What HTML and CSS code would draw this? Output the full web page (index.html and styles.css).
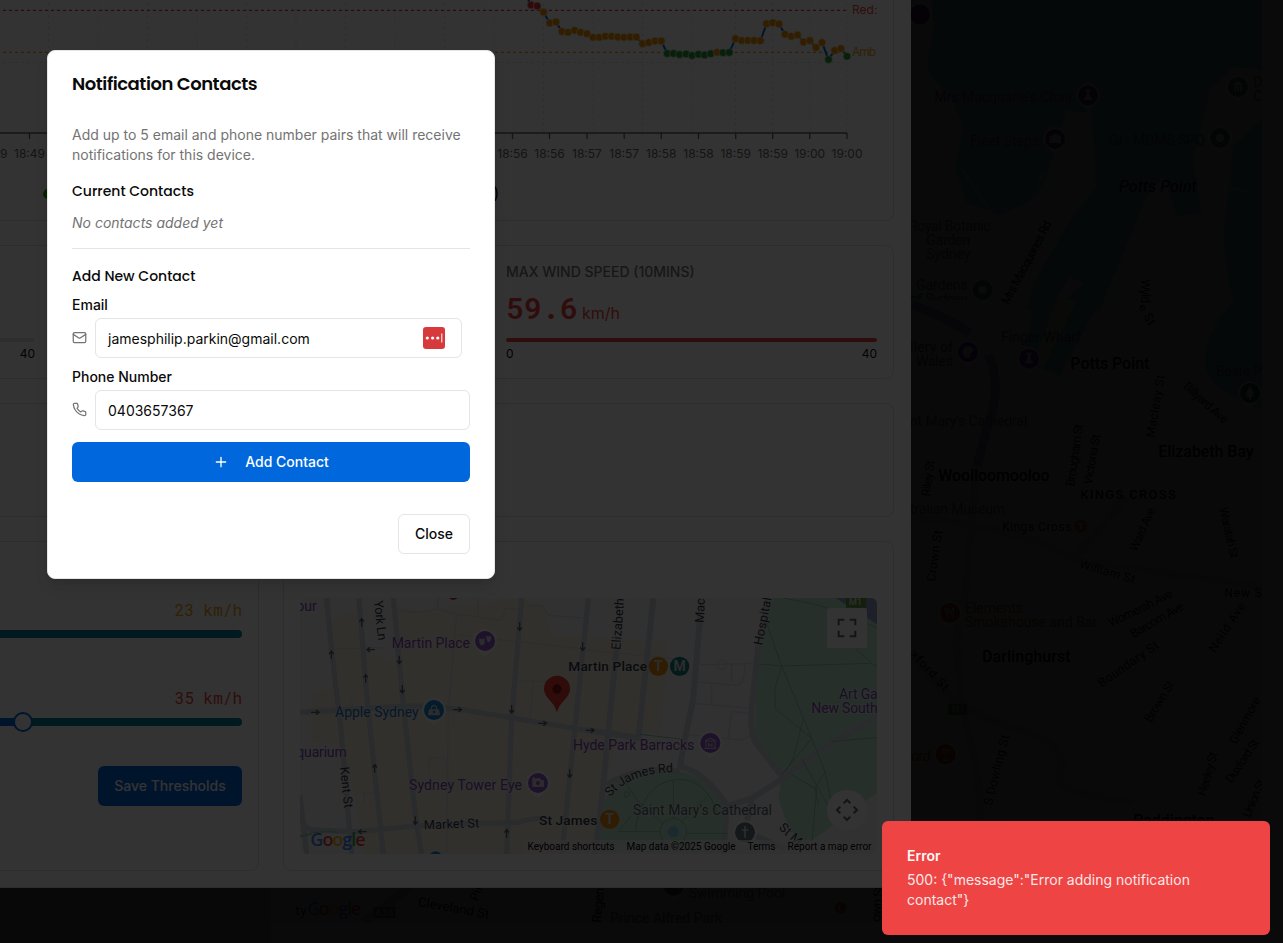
FILE: index.html
```html
<!DOCTYPE html>
<html lang="en">
<head>
<meta charset="utf-8">
<title>Notification Contacts</title>
<link rel="stylesheet" href="styles.css">
</head>
<body>
<svg class="world" viewBox="0 0 1283 943" aria-hidden="true">
  <defs>
    <g id="pin"><path d="M-36 0a36 36 0 1 1 72 0c0 17-13 27-36 45C-23 27-36 17-36 0z" fill="#fff"/><circle r="30"/></g>
    <clipPath id="worldClip"><path d="M271 0H1262V923H271z"/></clipPath>
  </defs>
  <rect width="271" height="943" fill="#d0d0d0"/>
  <rect x="271" width="1012" height="943" fill="#f8f8f8"/>
  <g clip-path="url(#worldClip)">
    <rect x="271" width="991" height="923" fill="#f5f5f5"/>
    <g transform="translate(900 0) scale(.33333)">
      <path d="M30 0H1090V1000H30z" fill="#d5eadc"/>
      <path d="M95 0H1090V210L1000 200 930 270 880 480 905 640 830 650 790 530 740 590 600 930H470L550 850 510 830 450 930H380L400 850 500 680 585 560 570 340 500 330 440 530 400 600 300 645 200 610 165 500 190 380 150 290 80 210 100 90z" fill="#80d0e4"/>
      <path d="M1090 340L1000 440 970 700 985 850 1010 930H1090zM600 930L740 590 790 530 830 650 970 630 990 930z" fill="#f5f5f5"/>
      <path d="M1090 350L1000 440 970 700 985 850 1010 930H1090z" fill="#80d0e4"/>
      <g class="street"><path d="M75 180Q120 350 90 500L70 930M180 500L320 700 200 820M430 520L380 640 250 800M800 650L860 930M900 680L970 930M740 650Q800 680 900 660M640 930L760 640M1050 580L920 540M570 330L585 560M500 360L450 560"/></g>
      <g class="poi purple"><text x="103" y="306" textLength="416">Mrs Macquarie's Chair</text><text x="210" y="438" textLength="207">Fleet Steps</text></g>
      <g fill="#8a42b5"><use href="#pin" x="60" y="43"/><use href="#pin" x="564" y="286"/><use href="#pin" x="465" y="417"/></g>
      <g fill="#557a70"><use href="#pin" x="1014" y="261"/><use href="#pin" x="960" y="414"/><use href="#pin" x="248" y="870"/></g>
      <g fill="#fff"><circle cx="960" cy="414" r="12"/><circle cx="248" cy="870" r="12"/><path d="M552 300h24v-6l-5-2-4-14 6-10h-18l6 10-4 14-5 2zM448 407h8l4-5h10l4 5h9v22h-35zM1000 252l14-8 14 8v4h-28zm3 6h5v16h-5zm9 0h5v16h-5zm9 0h5v16h-5z"/></g>
      <g class="poi grey"><text x="1060" y="261">D</text><text x="1060" y="303">C</text><text x="627" y="435" textLength="288">GI - MDMS SPO</text><text x="26" y="693" textLength="246">Royal Botanic</text><text x="79" y="735" textLength="132">Garden</text><text x="79" y="777" textLength="132">Sydney</text><text x="48" y="870" textLength="155">Gardens</text><text x="30" y="912" textLength="173">of Sydney</text></g>
      <text class="area italic" x="657" y="575" textLength="233">Potts Point</text>
      <g class="road"><text transform="translate(325 916) rotate(-62)" textLength="278">Mrs Macquaries Rd</text><text transform="translate(722 838) rotate(90)" textLength="72">Wyld</text></g>
    </g>
    <g transform="translate(900 300) scale(.33333)">
      <path d="M400 0L370 180 480 230 600 0z" fill="#80d0e4"/><path d="M470 0L400 190 430 200 530 0z" fill="#f0ead8"/>
      <path d="M1000 0Q890 130 920 220Q970 290 1090 330V0z" fill="#80d0e4"/>
      <path d="M30 0H250L260 300 120 420 30 490zM980 560L1090 520V750L1000 740z" fill="#cdeed8"/>
      <path d="M35 15Q130 45 210 100M265 165Q310 260 260 390L230 500" fill="none" stroke="#9aacd2" stroke-width="28"/>
      <path d="M230 500L190 930M30 650Q400 690 520 780L1090 860M520 780L680 590" fill="none" stroke="#d0d8dc" stroke-width="24"/>
      <g class="street"><path d="M310 60L350 220 520 250 640 0M560 250L470 720M610 250L540 700M670 100L790 90 750 390 730 600M320 260L540 290M330 340L540 350M390 300L380 430 500 450M610 410L740 430M630 480L730 500M600 540L730 560M130 430L100 880M170 430L150 640M210 700L30 820M560 740L700 810 850 590M770 500Q900 650 830 800M280 720L240 930M330 720L290 930M400 750L350 930M500 790L460 930M860 80Q840 250 1000 400Q900 500 1000 700"/></g>
      <g class="poi purple blueish"><text x="303" y="126" textLength="240">Finger Wharf</text><text x="30" y="157" textLength="129">llery of</text><text x="48" y="199" textLength="111">Wales</text><text x="30" y="643" textLength="285">tralian Museum</text></g>
      <g fill="#7a45c5"><use href="#pin" x="204" y="156"/><use href="#pin" x="387" y="176"/></g>
      <g fill="#fff"><path d="M375 190h24v-6l-5-2-4-14 6-10h-18l6 10-4 14-5 2z"/><path d="M204 139a17 17 0 1 0 8 32l-3-9 8-5 4-5a17 17 0 0 0-17-13z"/></g>
      <g class="poi grey"><text x="30" y="378" textLength="352">nt Mary's Cathedral</text><text x="948" y="228" textLength="138">Beare P</text></g>
      <use href="#pin" x="1050" y="279" fill="#16884b"/><path d="M1050 259l14 22h-8l6 10h-9v8h-6v-8h-9l6-10h-8z" fill="#fff"/>
      <g class="area"><text x="511" y="208" textLength="237">Potts Point</text><text x="775" y="470" textLength="286">Elizabeth Bay</text><text x="115" y="542" textLength="334">Woolloomooloo</text><text class="small" x="541" y="597" textLength="286">KINGS CROSS</text></g>
      <g class="road"><text x="306" y="693" textLength="208">Kings Cross</text><text transform="translate(523 560) rotate(-82)" textLength="188">Brougham St</text><text transform="translate(575 555) rotate(-80)" textLength="152">Victoria St</text><text transform="translate(762 414) rotate(-80)" textLength="190">Macleay St</text><text transform="translate(848 262) rotate(42)" textLength="165">Billyard Ave</text><text transform="translate(90 590) rotate(-83)" textLength="108">Riley St</text><text transform="translate(105 846) rotate(-82)" textLength="155">Crown St</text><text transform="translate(536 803) rotate(16)" textLength="172">William St</text><text transform="translate(710 757) rotate(-66)" textLength="140">Ward Ave</text><text transform="translate(957 625) rotate(77)" textLength="155">Waratah St</text><text transform="translate(714 20) rotate(60)" textLength="68">e St</text><text x="973" y="890" textLength="112">New S</text></g>
      <circle cx="542" cy="679" r="20" fill="#e47b1c"/><path d="M534 671h16M542 671v18" stroke="#fff" stroke-width="4"/>
    </g>
    <g transform="translate(900 600) scale(.33333)">
      <path d="M320 260L460 190 580 210 500 340 350 350zM980 160L1090 60V180zM720 440h80v40h-80z" fill="#d2eadb"/>
      <path d="M170 0Q165 260 205 400T240 660M30 150Q150 330 330 380T480 510T700 600" fill="none" stroke="#d0dadc" stroke-width="26"/>
      <path d="M460 370Q560 340 590 260T820 130" fill="none" stroke="#dee1e6" stroke-width="20"/>
      <g class="street"><path d="M30 130L400 140M200 240L320 170M350 360Q480 350 580 220T900 60M840 170L820 330 1060 380M620 370Q540 460 600 530M410 400L470 540 400 660M500 400Q620 370 720 480M300 500L700 600M90 640L150 420M720 480H900V660M850 420V660M950 400L900 540M350 480L300 660M660 250L800 410M970 170L1090 230"/></g>
      <g class="poi orange"><text x="195" y="39" textLength="174">Elements</text><text x="195" y="81" textLength="397">Smokehouse and Bar</text><text x="33" y="483" textLength="59">ord</text></g>
      <g fill="#c8401b"><use href="#pin" x="150" y="39"/><use href="#pin" x="137" y="463"/></g><path d="M141 23v32M135 23v11h12V23M160 55V23q-8 8-8 20h8M125 450h24l-12 13zm12 13v17m-9 0h18" fill="none" stroke="#fff" stroke-width="3"/>
      <g class="area"><text x="246" y="185" textLength="266">Darlinghurst</text><text x="700" y="677" textLength="243">Paddington</text></g>
      <rect x="144" y="311" width="58" height="34" fill="#53803b"/><text class="shield" x="155" y="337">M1</text>
      <g class="road"><text transform="translate(632 82) rotate(-26)" textLength="210">Womerah Ave</text><text transform="translate(700 115) rotate(-30)" textLength="178">Barcom Ave</text><text transform="translate(605 263) rotate(-35)" textLength="212">Boundary St</text><text transform="translate(945 160) rotate(-57)" textLength="170">Neild Ave</text><text transform="translate(30 165) rotate(47)" textLength="150">xford St</text><text transform="translate(753 370) rotate(-59)" textLength="138">Brown St</text><text transform="translate(275 619) rotate(-76)" textLength="218">S Dowling St</text><text transform="translate(1008 435) rotate(-61)" textLength="155">Glenmore</text><text transform="translate(916 590) rotate(-74)" textLength="135">Heeley St</text><text transform="translate(995 552) rotate(-56)" textLength="150">Duxford St</text><text transform="translate(1050 655) rotate(-67)" textLength="120">Union St</text></g>
    </g>
    <path d="M604 887H727V923H580zM360 887H410L383 907H355z" fill="#d2eadb"/><path d="M410 887L363 923" stroke="#b3c0dc" stroke-width="9"/>
    <g class="bottom-streets"><path d="M304 897L343 887 359 923M410 907L565 900M501 917L525 887M557 923L569 887M727 923L739 887M754 923L766 887M418 900L525 923"/></g>
    <use href="#pin" transform="translate(673.500 886) scale(.33333)" fill="#367272"/>
    <g class="bottom-labels">
      <text x="295.500" y="915" textLength="11">ty</text>
      <text transform="translate(417.500 906) rotate(10)" textLength="72">Cleveland St</text>
      <text transform="translate(478 902) rotate(-72)">Pin</text>
      <text transform="translate(601 923) rotate(-85)" textLength="35">Regen</text>
      <text transform="translate(880 922) rotate(-85)" textLength="36">own St</text>
      <text class="soft-label" x="688.500" y="898" textLength="97">Swimming Pool</text>
      <text class="soft-label" x="610" y="923" textLength="112">Prince Alfred Park</text>
    </g>
    <text class="google low" x="307" y="915" textLength="54"><tspan fill="#4285f4">G</tspan><tspan fill="#ea4335">o</tspan><tspan fill="#fbbc05">o</tspan><tspan fill="#4285f4">g</tspan><tspan fill="#34a853">l</tspan><tspan fill="#ea4335">e</tspan></text>
    <rect x="373.500" y="907" width="22" height="11" fill="#537f45"/><text class="shield low" x="375.500" y="916" textLength="18">A36</text>
    <circle cx="840.500" cy="907.500" r="5.500" fill="#c33"/><path d="M839 904.500v6h3.500" fill="none" stroke="#fff"/>
  </g>
</svg>
<div class="shade"></div>

<main class="sheet">
  <section class="card chart">
    <svg width="893" height="220" viewBox="0 0 893 220">
      <path class="grid" d="M48.500 3V133M98 3V133M147.500 3V133M197 3V133M246.500 3V133M296 3V133M345.500 3V133M395 3V133M444.500 3V133M494 3V133M543.500 3V133M593 3V133M642.500 3V133M692 3V133M735.500 3V133M772.500 3V133M810 3V133M847 3V133M3 62.500H847"/>
      <path class="limit red" d="M3 10.300H847"/><path class="limit amber" d="M3 52.300H847"/>
      <path class="axis" d="M0 133H847M29.500 133v6M512.500 133v6M549.500 133v6M587 133v6M624.200 133v6M661.300 133v6M698.500 133v6M735.700 133v6M772.700 133v6M809.700 133v6M847 133v6"/>
      <g class="ticks"><text x="-8">18:49</text><text x="29.500">18:49</text><text x="512.500">18:56</text><text x="549.500">18:56</text><text x="587">18:57</text><text x="624.200">18:57</text><text x="661.300">18:58</text><text x="698.500">18:58</text><text x="735.700">18:59</text><text x="772.700">18:59</text><text x="809.700">19:00</text><text x="847">19:00</text></g>
      <text class="lab red" x="852" y="14">Red:</text><text class="lab amber" x="852" y="56.300" textLength="24">Amb</text>
      <polyline class="series" points="528,-1 531,5 537.300,6 543.500,12 549.700,23 556,22 562,31.500 568,32.300 574.500,30.300 580.500,32.300 587,33.700 593,37.300 599.300,37.300 605.300,36.300 611.600,36.300 617.700,37 624,37.300 630.300,37 636.300,37 642.500,43.700 648.700,42.500 655,41 661.300,41 667.300,53.500 673.500,53.500 679.500,54.500 686,54 692,55.500 698.500,54.300 704.500,55 710.700,53.700 717,52.300 723,52.700 729.300,52.500 735.500,38.700 741.700,40.500 748,40.500 754,40.500 760.500,40.700 766.500,23.700 772.700,22.700 779,24 785,34.300 791.300,36.300 797.500,35 803.500,42 810,40.500 816,47.500 822,42.500 828.500,59.500 834.700,50.500 841,48.500 847,56.300"/>
      <g id="dots"></g>
      <circle cx="48" cy="194" r="5" fill="#1faa00"/><text class="legend" x="493.500" y="199">)</text>
    </svg>
  </section>
  <section class="metrics">
    <div class="card metric"><div class="bar muted"></div><div class="range"><span></span><span>40</span></div></div>
    <div class="card metric"></div>
    <div class="card metric">
      <div class="name">MAX WIND SPEED (10MINS)</div>
      <div class="value"><b>59.6</b><span>km/h</span></div>
      <div class="bar"></div>
      <div class="range"><span>0</span><span>40</span></div>
    </div>
  </section>
  <section class="card spare"></section>
  <section class="bottom">
    <div class="card thresholds">
      <div class="level amber">23 km/h</div>
      <div class="track"></div>
      <div class="level red">35 km/h</div>
      <div class="track"><i class="fill"></i><i class="thumb"></i></div>
      <button class="save">Save Thresholds</button>
    </div>
    <div class="card location">
      <svg class="minimap" viewBox="300 598 577 256">
        <rect x="300" y="598" width="577" height="256" fill="#f5f5f5"/>
        <g transform="translate(285 585) scale(.33333)">
          <path d="M145 100L230 70 230 190 330 230 330 60 400 75 700 40 780 60 800 150 1150 170 1130 440 1000 450 950 640 940 830H240L200 590 145 480 80 470V320L140 310z" fill="#faf0df"/>
          <g class="street soft"><path d="M330 76L400 82 460 72 500 85 650 106 660 70 700 72M460 38L455 75M580 40V95M515 90L490 370 485 800M720 60L775 65 790 90 900 100M520 150L920 195M130 192L300 188M700 288L790 290M745 290L735 400M200 345L205 380M432 565V520L475 518 485 530M235 620L240 655M235 625H280M680 400L670 740"/></g>
          <g class="way"><path d="M125 40Q145 260 165 400L200 810M222 40L245 330 295 810M325 40L355 360 392 700 410 810M710 40L680 400L665 810M910 40L870 430 830 810M45 382L165 375 380 362 520 372 870 430 960 445M30 650Q50 730 80 735L220 740 400 722 700 712Q730 700 780 700M45 630L65 810"/></g>
          <path d="M45 752Q110 735 160 742M45 756L80 748" class="trail"/>
        </g>
        <g transform="translate(585 585) scale(.33333)">
          <path d="M540 38H880V620L650 790 600 700 580 640 590 575 510 460 515 200zM45 800Q20 560 210 555T420 690V800z" fill="#c4ecd5"/>
          <path d="M750 38H880V120z" fill="#8fa0c9"/>
          <g class="street soft"><path d="M0 195L300 225M330 240L500 235M330 290L440 300Q480 310 480 240M380 300V360M430 460L440 380L500 385M330 355L495 370M310 450L470 465 500 450M440 240V290"/><circle cx="410" cy="238" r="14"/></g>
          <g class="way wide"><path d="M205 40L160 460M95 190L70 440 50 650 30 810M350 38L325 340L300 460 285 545Q360 560 425 660L415 810M0 435L70 445 165 460M285 560Q160 540 65 600M550 38L520 180 500 370Q495 440 510 470L595 580 500 640 420 665M595 580Q700 490 880 395M500 640L480 740 600 790"/></g>
          <g class="trail"><path d="M525 237L590 243 860 235 880 245M540 100L590 243 570 310V370L680 460 720 560 750 700 650 520M590 243L655 400 625 520 600 560M800 180L860 235M655 400L680 460 590 570M740 470L880 457M720 560L690 610 620 570M690 610L700 660M165 448L285 462M265 585V700M265 740m-40 0a40 40 0 1 0 80 0 40 40 0 1 0-80 0M225 740H100L140 690M305 745H430M290 710L370 630M235 715L160 650 120 590M290 765L340 800M240 770L190 800M150 740Q170 600 265 585T400 690M695 610L680 780M590 38L700 60 880 130"/><circle cx="125" cy="628" r="8"/></g>
          <circle cx="265" cy="740" r="17" fill="#85cfe8"/>
        </g>
        <g transform="translate(285 585) scale(.33333)">
          <path class="arrows" d="M139 222v-24m-7 9l7-9 7 9M230 125v-24m-7 9l7-9 7 9M242 293v-24m-7 9l7-9 7 9M269 563v-24m-7 9l7-9 7 9M665 758v-24m-7 9l7-9 7 9M343 212v24m-7-9l7 9 7-9M352 300v24m-7-9l7 9 7-9M391 694v24m-7-9l7 9 7-9M704 112v24m-7-9l7 9 7-9M680 360v24m-7-9l7 9 7-9M893 172v24m-7-9l7 9 7-9M854 553v24m-7-9l7 9 7-9M270 194h-24m9-7l-9 7 9 7M245 740h-24m9-7l-9 7 9 7M78 382h24m-9-7l9 7-9 7M505 374h24m-9-7l9 7-9 7M760 415h24m-9-7l9 7-9 7M903 436h24m-9-7l9 7-9 7"/>
          <g class="poi purple"><text x="34" y="79">our</text><text x="320" y="189" textLength="235">Martin Place</text><text x="34" y="515" textLength="151">quarium</text><text x="372" y="615" textLength="339">Sydney Tower Eye</text></g>
          <text class="poi blue" x="150" y="396" textLength="251">Apple Sydney</text>
          <g fill="#9657d0"><use href="#pin" x="600" y="168"/><use href="#pin" x="759" y="594"/></g>
          <use href="#pin" x="447" y="375" fill="#1385d5"/>
          <g fill="#ddd"><path d="M583 160q8 5 16 0v13q-3 8-8 8t-8-8zM602 152q8 5 16 0v13q-3 8-10 7zM742 586h8l4-6h12l3 6h8v20h-35zM432 373h30l3 18h-36zM745 576h5v5h5v4h-5v5h-5v-5h-5v-4h5z"/></g><path d="M439 373q0-12 8-12t8 12" fill="none" stroke="#ddd" stroke-width="4"/><circle cx="759" cy="594" r="6" fill="#9657d0"/><circle cx="447" cy="381" r="4" fill="#1385d5"/>
          <circle cx="505" cy="30" r="15" fill="#e02525"/><circle cx="452" cy="820" r="21" fill="#1385d5"/>
          <path d="M816 384C810 350 777 340 777 311a39 39 0 0 1 78 0C855 340 822 350 816 384z" fill="#ea3b2e"/><circle cx="816" cy="312" r="14" fill="#8b1712"/>
          <g class="road"><text transform="translate(267 48) rotate(84)" textLength="120">York Ln</text><text transform="translate(165 547) rotate(84)" textLength="124">Kent St</text><text transform="translate(417 733) rotate(-2)" textLength="166">Market St</text></g>
          <g class="road station"><text x="850" y="259" textLength="236">Martin Place</text><text x="762" y="720" textLength="175">St James</text></g>
          <text class="google" x="76" y="784" textLength="166"><tspan fill="#4285f4">G</tspan><tspan fill="#ea4335">o</tspan><tspan fill="#fbbc05">o</tspan><tspan fill="#4285f4">g</tspan><tspan fill="#34a853">l</tspan><tspan fill="#ea4335">e</tspan></text>
        </g>
        <g transform="translate(585 585) scale(.33333)">
          <g class="road"><text transform="translate(106 195) rotate(-86)" textLength="155">Elizabeth</text><text transform="translate(356 114) rotate(-87)" textLength="73">Mac</text><text transform="translate(532 182) rotate(-79)" textLength="145">Hospital</text><path id="rd" d="M75 636Q135 565 260 562" fill="none"/><text textLength="210"><textPath href="#rd">St James Rd</textPath></text><text transform="translate(580 730) rotate(43)" textLength="78">St M</text></g>
          <g class="poi purple"><text x="-36" y="495" textLength="364">Hyde Park Barracks</text><text x="762" y="342" textLength="116">Art Ga</text><text x="679" y="384" textLength="199">New South</text></g>
          <text class="poi grey" x="144" y="690" textLength="417">Saint Mary's Cathedral</text>
          <use href="#pin" x="376" y="474" fill="#9657d0"/><path d="M360 468l16-9 16 9zM363 470v19M390 470v19M358 490h36M371 473v14M381 473v14M371 480h10" fill="none" stroke="#ddd" stroke-width="3"/>
          <use href="#pin" x="480" y="742" fill="#697b82"/><path d="M480 723v35M470 735h20" stroke="#ddd" stroke-width="5"/>
          <circle cx="220" cy="244" r="29" fill="#f18c0c"/><circle cx="284" cy="244" r="29" fill="#13847c"/><circle cx="74" cy="703" r="29" fill="#f18c0c"/>
          <g class="badge"><text x="220" y="259">T</text><text x="284" y="259">M</text><text x="74" y="718">T</text></g>
          <rect x="783" y="34" width="60" height="34" fill="#5f9b3b"/><text class="shield" x="792" y="60">M1</text>
          <rect x="726" y="69" width="120" height="120" rx="5" fill="#fff"/><path d="M761 121v-17h17M794 104h17v17M811 137v17h-17M778 154h-17v-17" fill="none" stroke="#666" stroke-width="6"/>
          <circle cx="786" cy="675" r="60" fill="#fff"/><path d="M776 655l10-10 10 10M776 695l10 10 10-10M766 665l-10 10 10 10M806 665l10 10-10 10" fill="none" stroke="#666" stroke-width="6"/>
        </g>
        <rect x="524" y="840" width="353" height="14" fill="#f5f5f5" opacity=".7"/>
        <g class="credits"><text x="527.500" y="850" textLength="87">Keyboard shortcuts</text><text x="626.500" y="850" textLength="109">Map data ©2025 Google</text><text x="747.500" y="850" textLength="28">Terms</text><text x="787.500" y="850" textLength="84">Report a map error</text></g>
      </svg>
    </div>
  </section>
</main>
<div class="shade"></div>

<div class="dialog" role="dialog">
  <h2>Notification Contacts</h2>
  <p class="intro">Add up to 5 email and phone number pairs that will receive notifications for this device.</p>
  <h3 class="current">Current Contacts</h3>
  <p class="none">No contacts added yet</p>
  <hr>
  <h3 class="new">Add New Contact</h3>
  <label>Email</label>
  <div class="field email">
    <svg class="icon" viewBox="0 0 24 24"><rect x="2" y="4" width="20" height="16" rx="2"/><path d="m22 7-8.970 5.700a1.940 1.940 0 0 1-2.060 0L2 7"/></svg>
    <div class="input"><span>jamesphilip.parkin@gmail.com</span><svg class="pass" viewBox="0 0 22 22"><rect width="22" height="22" rx="3" fill="#d63a3a"/><circle cx="4.300" cy="11" r="1.600"/><circle cx="9.600" cy="11" r="1.600"/><circle cx="14.800" cy="11" r="1.600"/><path d="M18.300 6.500h1v9h-1z"/></svg></div>
  </div>
  <label class="second">Phone Number</label>
  <div class="field">
    <svg class="icon" viewBox="0 0 24 24"><path d="M22 16.920v3a2 2 0 0 1-2.180 2 19.790 19.790 0 0 1-8.630-3.070 19.500 19.500 0 0 1-6-6 19.790 19.790 0 0 1-3.070-8.670A2 2 0 0 1 4.110 2h3a2 2 0 0 1 2 1.720 12.840 12.840 0 0 0 .7 2.810 2 2 0 0 1-.45 2.110L8.090 9.910a16 16 0 0 0 6 6l1.270-1.270a2 2 0 0 1 2.110-.45 12.840 12.840 0 0 0 2.810.7A2 2 0 0 1 22 16.920z"/></svg>
    <div class="input"><span>0403657367</span></div>
  </div>
  <button class="add"><svg class="plus" viewBox="0 0 24 24"><path d="M5 12h14M12 5v14"/></svg>Add Contact</button>
  <button class="close">Close</button>
</div>

<div class="toast" role="alert"><strong>Error</strong><p>500: {"message":"Error adding notification contact"}</p></div>
<script src="chart.js"></script>
</body>
</html>
```
FILE: chart.js
```js
// Adds one marker per reading, coloured by the threshold it crosses.
const pts = document.querySelector('.series').getAttribute('points').split(' ').slice(1);
const layer = document.getElementById('dots');
for (const p of pts) {
  const [x, y] = p.split(',').map(Number);
  const c = document.createElementNS('http://www.w3.org/2000/svg', 'circle');
  c.setAttribute('cx', x);
  c.setAttribute('cy', y);
  c.setAttribute('r', 3.9);
  c.setAttribute('class', y < 10.3 ? 'hot' : y > 52.4 ? 'ok' : 'warn');
  layer.appendChild(c);
}
```
FILE: styles.css
```css
* { box-sizing: border-box; }
body { margin: 0; width: 1283px; height: 943px; overflow: hidden; background: #fff; font-family: Inter, "Open Sans", sans-serif; font-size: 14px; line-height: 20px; color: #0a0a0a; }
h2, h3, p { margin: 0; }
button { font: inherit; font-weight: 500; border: 0; border-radius: 6px; height: 40px; }
.world { position: fixed; inset: 0; width: 1283px; height: 943px; }
.shade { position: fixed; inset: 0; background: rgba(0, 0, 0, .8); }

/* map styling */
svg text { font-family: Roboto, sans-serif; }
.street { fill: none; stroke: #dcdfe6; stroke-width: 6; }
.street.soft { stroke: #dfe2e8; stroke-width: 5; }
.bottom-streets { fill: none; stroke: #dcdfe6; stroke-width: 2; }
.bottom-labels { font-size: 13px; fill: #111; }
.bottom-labels .soft-label { font-size: 14px; fill: #5a6870; }
.way { fill: none; stroke: #d2d7e0; stroke-width: 16; }
.way.wide { stroke-width: 18; }
.trail { fill: none; stroke: #88ccab; stroke-width: 3; }
.poi { font-size: 42px; }
.purple { fill: #8445ba; }
.purple.blueish { fill: #555096; }
.blue { fill: #1673c5; }
.grey { fill: #5a6870; }
.orange { fill: #a04a16; }
.poi, .road text { paint-order: stroke; stroke: #f5f5f5; stroke-width: 5px; stroke-opacity: .6; }
.world .poi, .world .road text { stroke: none; }
.area { font-size: 48px; font-weight: 500; fill: #000; }
.area .small { font-size: 39px; }
.italic { font-style: italic; font-weight: 400; }
.road { font-size: 38px; font-weight: 400; fill: #333b44; }
.world .road { font-size: 37px; fill: #111; }
.station { font-size: 41px; font-weight: 500; fill: #333a44; }
.shield { font-size: 27px; font-weight: 700; fill: #ddd; }
.shield.low { font-size: 9px; }
svg .google { font: 600 54px "Open Sans", sans-serif; }
svg .google.low { font-size: 18px; }
.badge { font-size: 42px; font-weight: 700; fill: #ddd; text-anchor: middle; }
.arrows { fill: none; stroke: #56616c; stroke-width: 4; }
.credits { font-size: 10px; fill: #000; }

.sheet { position: fixed; left: 0; top: 0; width: 911px; height: 888px; background: #fff; border-bottom: 1px solid #dcdcdc; display: flex; flex-direction: column; gap: 24px; padding-right: 17px; overflow: hidden; }
.card { border: 1px solid #e2e2e4; border-radius: 8px; background: #fff; flex: none; }
.chart { height: 221px; border-width: 0 1px 1px 0; border-radius: 0 0 8px 0; }
.chart svg { display: block; }
.grid { stroke: #e5e5e5; stroke-dasharray: 3 3; fill: none; }
.limit { fill: none; stroke-dasharray: 3 3; stroke-width: 1.3; }
.limit.red { stroke: #e52f46; }
.limit.amber { stroke: #f59e0b; }
.axis { stroke: #666; fill: none; stroke-width: 1.3; }
svg .ticks text, svg .lab { font: 12px Inter, sans-serif; }
.ticks text { fill: #666; text-anchor: middle; transform: translateY(158px); }
.lab.red { fill: #ef4444; }
.lab.amber { fill: #f59e0b; }
svg .legend { font: 16px Inter, sans-serif; }
.series { fill: none; stroke: #0066dd; stroke-width: 2; }
#dots circle { stroke: #fff; stroke-width: .6; }
.hot { fill: #ef3535; }
.warn { fill: #f59300; }
.ok { fill: #2c9a3c; }

.metrics { display: flex; gap: 16px; height: 134px; justify-content: flex-end; }
.metric { width: 405px; flex: none; height: 134px; padding: 16px; }
.name { font-weight: 500; color: #737373; height: 20px; }
.value { height: 36px; margin-top: 8px; display: flex; align-items: baseline; gap: 4px; color: #ef4444; line-height: 36px; }
.value b { font: 600 30px/36px "Roboto Mono", "Liberation Mono", monospace; }
.value span { font-size: 16px; }
.bar { height: 4px; border-radius: 2px; background: #ef4444; margin-top: 12px; }
.bar.muted { background: #e5e7eb; margin-top: 76px; }
.range { display: flex; justify-content: space-between; font-size: 12px; line-height: 16px; margin-top: 4px; }
.spare { height: 114px; border-left: 0; border-radius: 0 8px 8px 0; }
.bottom { display: flex; gap: 24px; height: 330px; }
.thresholds { width: 259px; height: 330px; border-left: 0; border-radius: 0 8px 8px 0; padding: 56px 16px 0 0; display: flex; flex-direction: column; align-items: flex-end; }
.level { font: 16px/24px "Roboto Mono", "Liberation Mono", monospace; }
.level.amber { color: #f59e0b; }
.level.red { color: #ef4444; margin-top: 48px; }
.track { position: relative; width: 242px; height: 8px; margin-top: 8px; border-radius: 0 4px 4px 0; background: #00849c; }
.fill { position: absolute; left: 0; top: 0; width: 20px; height: 8px; background: #0066dd; }
.thumb { position: absolute; left: 13px; top: -6px; width: 20px; height: 20px; border-radius: 50%; border: 2px solid #0066dd; background: #fff; }
.save { width: 144px; background: #0066dd; color: #fff; margin-top: 40px; padding: 0; }
.location { flex: 1; padding: 56px 16px 16px; }
.minimap { display: block; width: 577px; height: 256px; border-radius: 6px; }

.dialog { position: fixed; left: 47px; top: 49.5px; width: 448px; height: 529px; padding: 24px; border: 1px solid #e5e5e5; border-radius: 8px; background: #fff; box-shadow: 0 10px 15px -3px rgba(0,0,0,.1), 0 4px 6px -4px rgba(0,0,0,.1); display: flex; flex-direction: column; }
h2 { font: 600 18px/18px Poppins, Inter, sans-serif; letter-spacing: -.45px; white-space: nowrap; }
.intro { margin-top: 32.5px; color: #737373; }
h3 { font: 500 14px/20px Poppins, Inter, sans-serif; }
.current { margin-top: 16px; }
.none { margin-top: 12px; font-style: italic; color: #737373; }
hr { width: 100%; height: 1px; border: 0; background: #e5e5e5; margin: 15px 0 17px; }
label { font-weight: 500; line-height: 14px; margin-top: 12px; }
.second { margin-top: 12.5px; }
.field { display: flex; align-items: center; gap: 8px; margin-top: 5.5px; }
.email { width: 390px; }
.icon { width: 15px; height: 15px; fill: none; stroke: #737373; stroke-width: 2; stroke-linecap: round; stroke-linejoin: round; }
.input { flex: 1; height: 40px; border: 1px solid #e5e5e5; border-radius: 6px; padding: 2px 16px 0 12px; display: flex; align-items: center; justify-content: space-between; }
.pass { width: 22px; height: 22px; fill: #fff; margin-top: -2px; }
.add { margin-top: 12px; flex: none; background: #0068dc; color: #fff; display: flex; align-items: center; justify-content: center; gap: 16px; }
.plus { width: 16px; height: 16px; fill: none; stroke: #fff; stroke-width: 2; stroke-linecap: round; }
.close { align-self: flex-end; margin-top: 32px; width: 72px; background: #fff; border: 1px solid #e5e5e5; color: #0a0a0a; flex: none; padding: 0; }
.toast { position: fixed; left: 882px; top: 821px; width: 388px; height: 114px; border-radius: 6px; background: #ef4444; color: #fafafa; padding: 25px; }
.toast strong { display: block; font-weight: 600; }
.toast p { margin-top: 4px; opacity: .9; width: 310px; }
```
